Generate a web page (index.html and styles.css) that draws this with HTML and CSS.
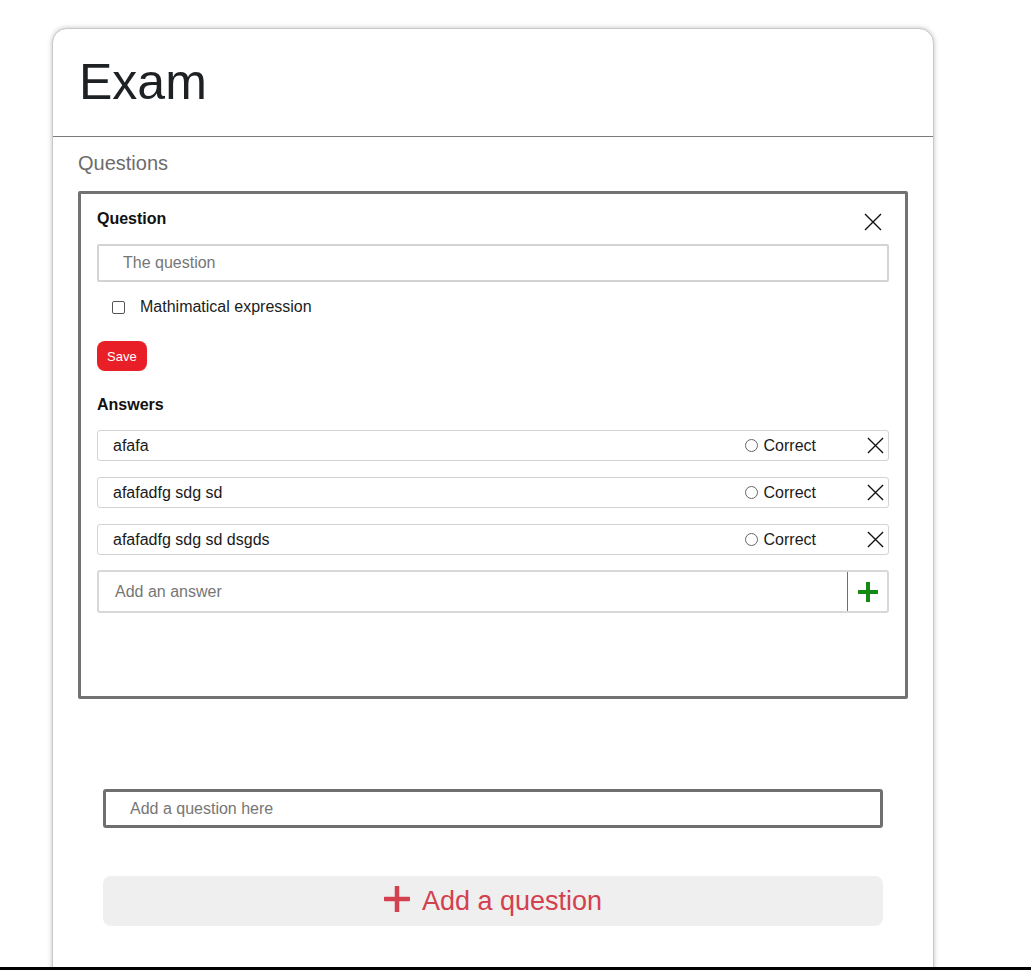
FILE: index.html
```html
<!DOCTYPE html>
<html>
<head>
<meta charset="utf-8">
<link rel="stylesheet" href="styles.css">
</head>
<body>
<div class="page">
  <div class="card">
    <div class="card-header">
      <h1 class="title">Exam</h1>
    </div>
    <div class="card-body">
      <div class="section-label">Questions</div>
      <div class="qbox">
        <div class="qhead">
          <span class="label-bold">Question</span>
          <svg class="close-lg" width="18" height="18" viewBox="0 0 18 18"><path d="M1 1L17 17M17 1L1 17" stroke="#111" stroke-width="1.4" fill="none"/></svg>
        </div>
        <div class="qinput"><span class="ph">The question</span></div>
        <label class="check-row"><span class="checkbox"></span><span>Mathimatical expression</span></label>
        <button class="save">Save</button>
        <div class="label-bold answers-label">Answers</div>
        <div class="answers">
          <div class="answer">
            <span class="atext">afafa</span>
            <span class="correct"><span class="radio"></span>Correct</span>
            <svg class="close-sm" width="18" height="18" viewBox="0 0 18 18"><path d="M1 1L17 17M17 1L1 17" stroke="#111" stroke-width="1.4" fill="none"/></svg>
          </div>
          <div class="answer">
            <span class="atext">afafadfg sdg sd</span>
            <span class="correct"><span class="radio"></span>Correct</span>
            <svg class="close-sm" width="18" height="18" viewBox="0 0 18 18"><path d="M1 1L17 17M17 1L1 17" stroke="#111" stroke-width="1.4" fill="none"/></svg>
          </div>
          <div class="answer">
            <span class="atext">afafadfg sdg sd dsgds</span>
            <span class="correct"><span class="radio"></span>Correct</span>
            <svg class="close-sm" width="18" height="18" viewBox="0 0 18 18"><path d="M1 1L17 17M17 1L1 17" stroke="#111" stroke-width="1.4" fill="none"/></svg>
          </div>
        </div>
        <div class="add-answer">
          <span class="ph">Add an answer</span>
          <span class="add-btn"><svg width="22" height="22" viewBox="0 0 22 22"><path d="M11 1V21M1 11H21" stroke="#138a13" stroke-width="4" fill="none"/></svg></span>
        </div>
      </div>
      <div class="new-q"><span class="ph">Add a question here</span></div>
      <button class="add-question"><svg width="26" height="26" viewBox="0 0 26 26"><path d="M13 1V25M1 13H25" stroke="#d3414f" stroke-width="4.5" stroke-linecap="round" fill="none"/></svg><span>Add a question</span></button>
    </div>
  </div>
</div>
<div class="bottom-bar"></div>
</body>
</html>
```

FILE: styles.css
```css
* { box-sizing: border-box; }
html, body { margin: 0; padding: 0; height: 100%; overflow: hidden; }
body {
  font-family: "Liberation Sans", Arial, sans-serif;
  color: #212529;
  background: #fff;
}
.page {
  padding: 28px 97px 0 52px;
}
.card {
  width: 882px;
  min-height: 960px;
  border: 1px solid #c8c8c8;
  border-radius: 15px;
  box-shadow: 0 0 5px rgba(0,0,0,0.25);
  background: #fff;
}
.card-header {
  height: 108px;
  border-bottom: 1px solid #7a7a7a;
  padding: 24px 26px 0;
}
.title {
  margin: 0;
  font-weight: 400;
  font-size: 50px;
  line-height: 58px;
  color: #1d2124;
}
.card-body {
  padding: 14px 25px 0;
}
.section-label {
  font-size: 20px;
  color: #6c6c6c;
  line-height: 24px;
  margin-bottom: 16px;
}
.qbox {
  border: 3px solid #727272;
  border-radius: 2px;
  padding: 15px 16px 83px;
}
.qhead {
  display: flex;
  justify-content: space-between;
  align-items: flex-start;
  height: 35px;
}
.label-bold {
  font-weight: 700;
  font-size: 16px;
  line-height: 19px;
  color: #111;
}
.close-lg { margin-top: 4px; margin-right: 7px; }
.qinput {
  height: 38px;
  border: 2px solid #d3d3d3;
  border-radius: 2px;
  padding: 0 24px;
  display: flex;
  align-items: center;
}
.ph {
  font-size: 16px;
  color: #767676;
}
.check-row {
  display: flex;
  align-items: center;
  height: 50px;
  padding-left: 15px;
  font-size: 16px;
  color: #1c1c1c;
}
.checkbox {
  width: 13px;
  height: 13px;
  border: 1px solid #555;
  border-radius: 2px;
  margin-right: 15px;
}
.save {
  display: block;
  margin-top: 9px;
  height: 30px;
  padding: 0 10px;
  border: none;
  border-radius: 8px;
  background: #e81f27;
  color: #fff;
  font-family: "Liberation Sans", Arial, sans-serif;
  font-size: 13px;
}
.answers-label { margin-top: 24px; line-height: 19px; }
.answers {
  margin-top: 16px;
  display: flex;
  flex-direction: column;
  gap: 16px;
}
.answer {
  height: 31px;
  border: 1px solid #d3d3d3;
  border-radius: 3px;
  display: flex;
  align-items: center;
  padding: 0 4px 0 15px;
  font-size: 16px;
  color: #1a1a1a;
}
.atext { flex: 1; }
.correct {
  display: flex;
  align-items: center;
  margin-right: 51px;
}
.radio {
  width: 13px;
  height: 13px;
  border: 1px solid #666;
  border-radius: 50%;
  margin-right: 6px;
}
.close-sm { width: 17px; height: 17px; }
.add-answer {
  margin-top: 15px;
  height: 43px;
  border: 2px solid #d8d8d8;
  border-radius: 3px;
  display: flex;
  align-items: center;
  padding-left: 16px;
}
.add-answer .ph { flex: 1; }
.add-btn {
  width: 40px;
  height: 100%;
  border-left: 1px solid #6e6e6e;
  display: flex;
  align-items: center;
  justify-content: center;
}
.new-q {
  margin: 90px 25px 0;
  height: 39px;
  border: 3px solid #6f6f6f;
  border-radius: 3px;
  padding: 0 24px;
  display: flex;
  align-items: center;
}
.add-question {
  margin: 48px 25px 0;
  width: 780px;
  height: 50px;
  border: none;
  border-radius: 8px;
  background: #efefef;
  color: #d3414f;
  font-family: "Liberation Sans", Arial, sans-serif;
  font-size: 27px;
  display: flex;
  align-items: center;
  justify-content: center;
  gap: 12px;
}
.add-question svg { margin-top: -4px; }
.bottom-bar {
  position: fixed;
  left: 0;
  right: 0;
  bottom: 0;
  height: 3px;
  background: #000;
}
```
